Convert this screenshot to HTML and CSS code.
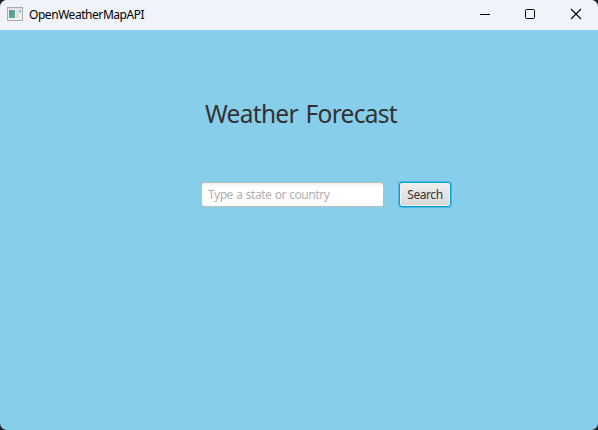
FILE: index.html
```html
<!DOCTYPE html>
<html lang="en">
<head>
<meta charset="utf-8">
<title>OpenWeatherMapAPI</title>
<link rel="stylesheet" href="styles.css">
</head>
<body>
<div class="window">
  <header class="titlebar">
    <svg class="app-icon" width="16" height="14" viewBox="0 0 16 14">
      <defs>
        <linearGradient id="pane" x1="0" y1="0" x2="1" y2="1">
          <stop offset="0" stop-color="#5f8fb5"/>
          <stop offset="1" stop-color="#5fb487"/>
        </linearGradient>
      </defs>
      <rect x="0.5" y="0.5" width="15" height="13" fill="#f1f1f1" stroke="#a9abae"/>
      <path d="M1 1.5h14" stroke="#dcdddf"/>
      <rect x="2" y="3" width="6" height="8" fill="url(#pane)"/>
      <rect x="9" y="3" width="3" height="8" fill="#dedfe0"/>
      <path d="M12 3h2v4z" fill="#78aca9"/>
    </svg>
    <span class="title">OpenWeatherMapAPI</span>
    <div class="controls">
      <svg width="46" height="30" viewBox="0 0 46 30"><path d="M18 14.5h10" stroke="#000"/></svg>
      <svg width="45" height="30" viewBox="0 0 45 30"><rect x="17.5" y="9.5" width="9" height="9" rx="1" fill="none" stroke="#000"/></svg>
      <svg width="45" height="30" viewBox="0 0 45 30"><path d="M18 9l10 10M28 9l-10 10" stroke="#000" stroke-width="1.1" fill="none"/></svg>
    </div>
  </header>
  <main class="content">
    <h1 class="heading">Weather Forecast</h1>
    <form class="search">
      <input class="field" type="text" placeholder="Type a state or country">
      <button class="button" type="button">Search</button>
    </form>
  </main>
</div>
</body>
</html>
```
FILE: styles.css
```css
* { box-sizing: border-box; }
body {
  margin: 0;
  background: #202020;
  font-family: "Noto Sans", "Open Sans", sans-serif;
}
.window {
  display: flex;
  flex-direction: column;
  width: 598px;
  height: 430px;
  border-radius: 7px;
  overflow: hidden;
  background: #87ceeb;
}
.titlebar {
  display: flex;
  align-items: center;
  height: 30px;
  padding-left: 7px;
  background: #f0f3f9;
}
.app-icon { margin-bottom: 2px; }
.title {
  margin-left: 6px;
  font-size: 12px;
  line-height: 30px;
  letter-spacing: -0.45px;
  color: #000;
}
.controls {
  display: flex;
  margin-left: auto;
}
.content {
  display: flex;
  flex-direction: column;
  padding: 66px 0 0 201px;
}
.heading {
  margin: 0 0 0 4px;
  font-size: 24.5px;
  font-weight: 400;
  line-height: 36px;
  letter-spacing: -0.7px;
  word-spacing: 2px;
  color: #323232;
}
.search {
  display: flex;
  gap: 15px;
  margin-top: 50px;
}
.field {
  width: 183px;
  height: 25px;
  padding: 0 6px;
  border: 1px solid #b9bdc0;
  border-radius: 3px;
  background: linear-gradient(#f1f1f1, #fff 5px);
  font: 12px "Noto Sans", sans-serif;
  letter-spacing: -0.45px;
  word-spacing: 0.6px;
  outline: none;
}
.field::placeholder { color: #b0b0b0; opacity: 1; }
.button {
  width: 52px;
  height: 25px;
  padding: 0;
  border: 1px solid #039ed3;
  border-radius: 3px;
  background: linear-gradient(#efefef, #d9d9d9);
  box-shadow: 0 0 0 1px #4fb9e2, inset 0 0 0 1px #f2f2f2;
  font: 12px "Noto Sans", sans-serif;
  letter-spacing: -0.45px;
  color: #333;
}
```
